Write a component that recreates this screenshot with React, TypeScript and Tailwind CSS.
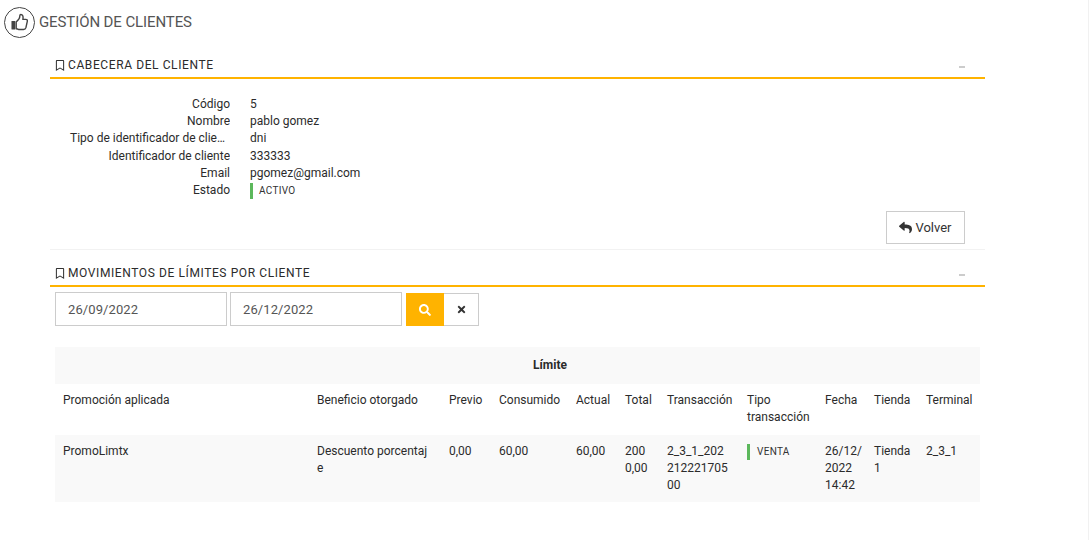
import React from "react";
import { FaRegBookmark, FaReply, FaSearch, FaTimes } from "react-icons/fa";

function SectionHeader({ title }: { title: string }) {
  return (
    <div className="flex h-[29px] items-center justify-between border-b-2 border-[#ffb300] pl-[5px] pr-5 pt-[3px]">
      <div className="flex items-center gap-[3px] text-[12px] tracking-[0.6px] text-[#2b2b2b]">
        <FaRegBookmark className="h-[11px] w-[10px] text-[#333]" />
        <span>{title}</span>
      </div>
      <div className="mt-[3px] h-[2px] w-[6px] bg-[#ccc]" />
    </div>
  );
}

function ThumbIcon() {
  return (
    <svg viewBox="0 0 18 18" className="h-[18px] w-[17px] text-[#444]" aria-hidden="true">
      <rect x="0.5" y="8" width="4" height="9" rx="0.6" fill="currentColor" />
      <path
        d="M5.5 9 L8.2 6 Q9.4 4.4 9.4 2 Q9.4 1 10.4 1 Q13.4 1 12.6 6.2 L15.6 6.2 Q17.8 6.2 17.2 8.6 L15.8 15 Q15.3 17 13.3 17 L8.4 17 Q6.8 16.4 5.5 16.2 Z"
        fill="none"
        stroke="currentColor"
        strokeWidth="1.5"
        strokeLinejoin="round"
      />
    </svg>
  );
}

const fields: [string, string][] = [
  ["Código", "5"],
  ["Nombre", "pablo gomez"],
  ["Tipo de identificador de cliente", "dni"],
  ["Identificador de cliente", "333333"],
  ["Email", "pgomez@gmail.com"],
];

function Status({ label, gap }: { label: string; gap: string }) {
  return (
    <span className={"flex items-center " + gap}>
      <span className="h-[16px] w-[3px] bg-[#5cb85c]" />
      <span className="text-[10px] tracking-[0.3px] text-[#333]">{label}</span>
    </span>
  );
}

const cols = [254, 132, 50, 77, 49, 42, 80, 78, 49, 52, 62];
const heads = ["Promoción aplicada", "Beneficio otorgado", "Previo", "Consumido", "Actual", "Total", "Transacción", "Tipo transacción", "Fecha", "Tienda", "Terminal"];
const cell = "px-2 py-2 align-top font-normal";

export default function App() {
  return (
    <div className="h-[540px] w-[1089px] overflow-hidden border-r border-[#f1f1f1] bg-white text-[12px] leading-[17px] text-[#2b2b2b] [font-family:Roboto,sans-serif]">
      <header className="flex h-[36px] items-center gap-[4px] pl-[4px] pt-[8px]">
        <div className="flex h-[31px] w-[31px] items-center justify-center rounded-full border border-[#444]">
          <ThumbIcon />
        </div>
        <h1 className="text-[15px] tracking-[-0.1px] text-[#555]">GESTIÓN DE CLIENTES</h1>
      </header>

      <main className="ml-[50px] w-[935px]">
        <div className="mt-[14px]">
          <SectionHeader title="CABECERA DEL CLIENTE" />
        </div>
        <section className="border-b border-[#f2f2f2] pb-[5px] pt-[16.5px]">
          <dl className="grid grid-cols-[180px_1fr] gap-x-5 leading-[17.35px]">
            {fields.map(([k, v]) => (
              <React.Fragment key={k}>
                <dt className="truncate pl-5 text-right">{k}</dt>
                <dd>{v}</dd>
              </React.Fragment>
            ))}
            <dt className="text-right">Estado</dt>
            <dd><Status label="ACTIVO" gap="gap-[6px]" /></dd>
          </dl>
          <div className="mt-[11.5px] flex justify-end pr-5">
            <button className="flex h-[33px] w-[79px] items-center justify-center gap-[3px] border border-[#ccc] pb-[1px] text-[13px] text-[#333]">
              <FaReply className="h-[13px] w-[13px]" />
              Volver
            </button>
          </div>
        </section>

        <div className="mt-[8px]">
          <SectionHeader title="MOVIMIENTOS DE LÍMITES POR CLIENTE" />
        </div>

        <div className="ml-[5px] mt-[5px] flex">
          <input readOnly value="26/09/2022" className="h-[34px] w-[172px] border border-[#ccc] px-[12px] text-[13px] tracking-[0.1px] text-[#555]" />
          <input readOnly value="26/12/2022" className="ml-[3px] h-[34px] w-[172px] border border-[#ccc] px-[12px] text-[13px] tracking-[0.1px] text-[#555]" />
          <button className="ml-[4px] mt-[1px] flex h-[33px] w-[38px] items-center justify-center bg-[#ffb300] text-white">
            <FaSearch className="h-[12px] w-[12px]" />
          </button>
          <button className="mt-[1px] flex h-[33px] w-[35px] items-center justify-center border border-l-0 border-[#ccc] text-[#333]">
            <FaTimes className="h-[11px] w-[11px]" />
          </button>
        </div>

        <table className="ml-[5px] mt-[21px] w-[925px] table-fixed border-collapse">
          <colgroup>
            {cols.map((w, i) => <col key={i} style={{ width: w }} />)}
          </colgroup>
          <thead>
            <tr className="bg-[#f9f9f9]">
              <th colSpan={2} />
              <th colSpan={4} className="h-[37px] text-center font-bold">Límite</th>
              <th colSpan={5} />
            </tr>
            <tr>
              {heads.map((h) => (
                <th key={h} className={cell + " pb-[9px] text-left"}>{h}</th>
              ))}
            </tr>
          </thead>
          <tbody>
            <tr className="bg-[#f9f9f9]">
              <td className={cell}>PromoLimtx</td>
              <td className={cell}>Descuento porcentaj<br />e</td>
              <td className={cell}>0,00</td>
              <td className={cell}>60,00</td>
              <td className={cell}>60,00</td>
              <td className={cell}>200<br />0,00</td>
              <td className={cell}>2_3_1_202<br />212221705<br />00</td>
              <td className={cell}><Status label="VENTA" gap="gap-[7px]" /></td>
              <td className={cell}>26/12/<br />2022<br />14:42</td>
              <td className={cell}>Tienda 1</td>
              <td className={cell}>2_3_1</td>
            </tr>
          </tbody>
        </table>
      </main>
    </div>
  );
}
